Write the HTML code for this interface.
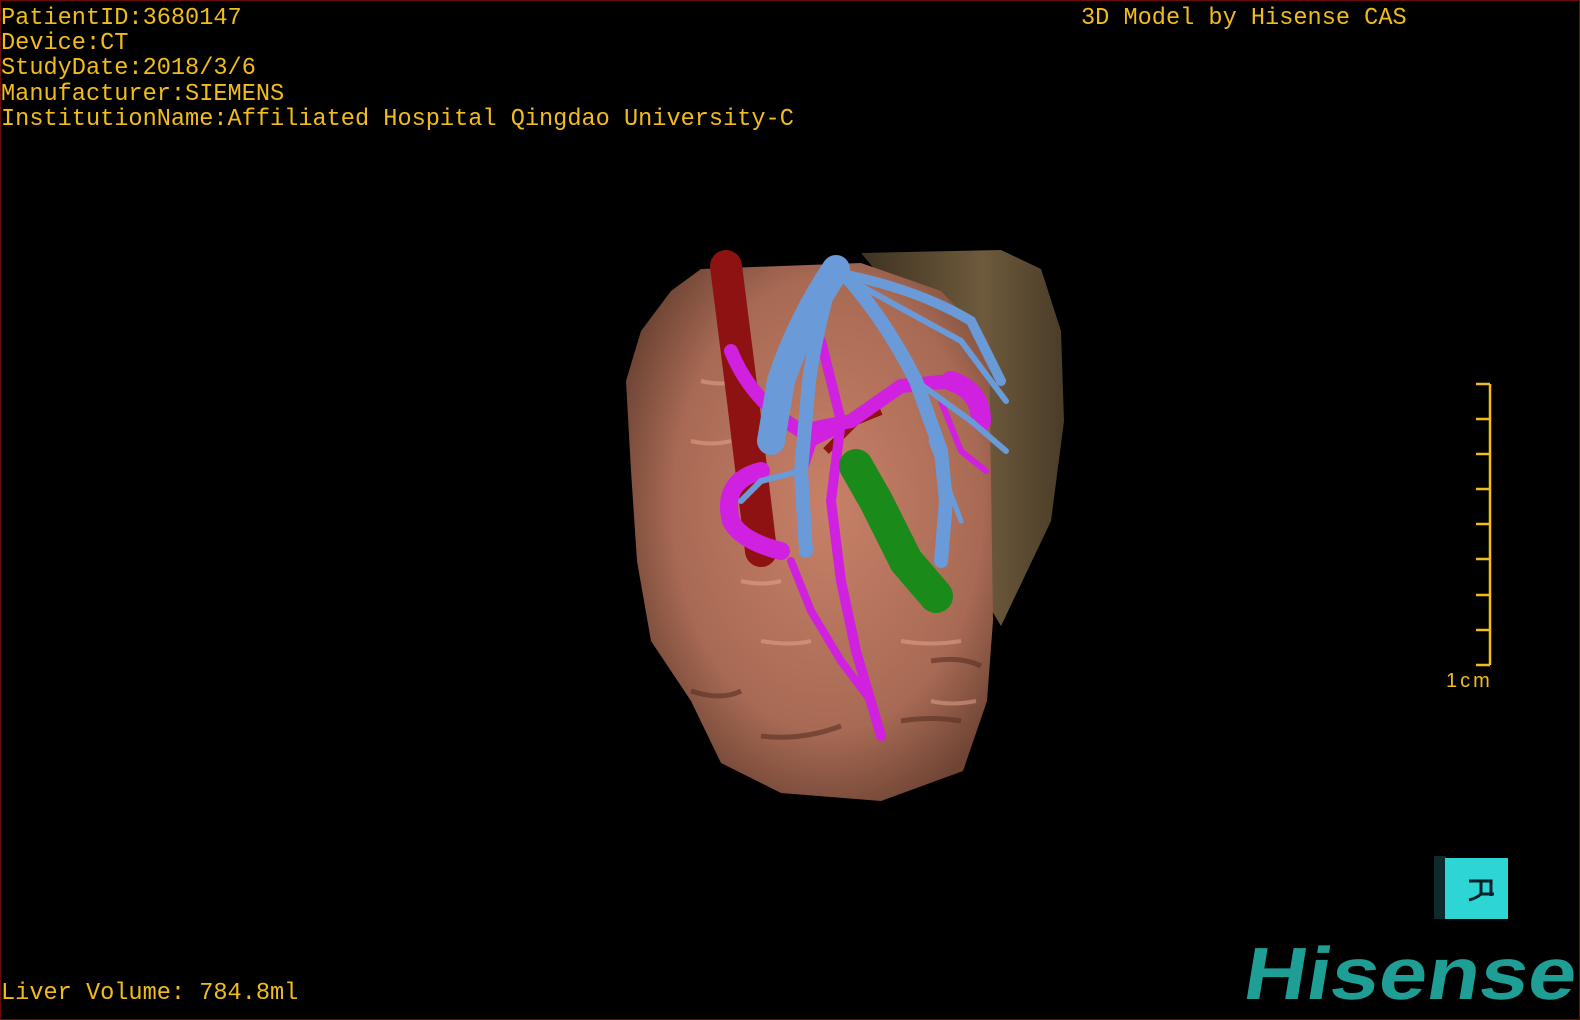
<!DOCTYPE html>
<html><head><meta charset="utf-8"><style>
html,body{margin:0;padding:0;background:#000;}
#s{position:relative;width:1580px;height:1020px;background:#000;overflow:hidden;box-sizing:border-box;border:1px solid #6a0c0c;}
.t{position:absolute;color:#f2bd1c;font-family:"Liberation Mono",monospace;font-size:23.6px;line-height:25.2px;white-space:pre;}
</style></head><body><div id="s">
<div class="t" style="left:0;top:5px">PatientID:3680147
Device:CT
StudyDate:2018/3/6
Manufacturer:SIEMENS
InstitutionName:Affiliated Hospital Qingdao University-C</div>
<div class="t" style="left:1080px;top:5px">3D Model by Hisense CAS</div>
<div class="t" style="left:0;top:980px">Liver Volume: 784.8ml</div>

<svg width="1580" height="1020" style="position:absolute;left:0;top:0">
<defs>
<radialGradient id="lv" cx="0.55" cy="0.45" r="0.6"><stop offset="0" stop-color="#c88068"/><stop offset="0.7" stop-color="#a86a54"/><stop offset="1" stop-color="#6e4434"/></radialGradient>
<linearGradient id="tan" x1="0" x2="1"><stop offset="0" stop-color="#3e3222"/><stop offset="0.6" stop-color="#6e5a3c"/><stop offset="1" stop-color="#4a3c28"/></linearGradient>
</defs>
<path d="M860,252 L1000,249 L1040,268 L1060,330 L1063,420 L1050,520 L1000,625 L985,600 L985,450 L940,360 L900,300Z" fill="url(#tan)"/>
<path d="M700,268 L860,262 L940,290 L988,340 L992,620 L986,700 L962,770 L880,800 L780,792 L720,762 L690,700 L650,640 L636,560 L630,470 L625,380 L640,330 L670,290Z" fill="url(#lv)"/>
<g fill="none" stroke="#e8a890" stroke-width="4" opacity="0.5">
<path d="M700,380 Q720,385 740,380"/><path d="M690,440 Q710,445 730,440"/><path d="M760,640 Q790,645 810,640"/><path d="M900,640 Q930,645 960,640"/><path d="M930,700 Q950,705 975,700"/><path d="M740,580 Q760,585 780,580"/>
</g>
<g fill="none" stroke="#5a3024" stroke-width="5" opacity="0.6">
<path d="M690,690 Q720,700 740,690"/><path d="M760,735 Q800,740 840,725"/><path d="M930,660 Q960,655 980,665"/><path d="M900,720 Q930,715 960,720"/>
</g>
<path d="M725,265 L742,400 L760,550" stroke="#8e1212" stroke-width="32" fill="none" stroke-linecap="round"/>
<path d="M825,450 L855,420 L880,410" stroke="#8e1212" stroke-width="8" fill="none"/>
<g fill="none" stroke="#d020e0" stroke-linecap="round">
<path d="M730,350 Q750,400 800,430 L850,420 L900,385 L950,380" stroke-width="14"/>
<path d="M760,470 Q720,480 730,520 Q740,540 780,550" stroke-width="18"/>
<path d="M820,340 L840,420 L830,500 L840,580 L855,650 L880,735" stroke-width="10"/>
<path d="M790,560 L810,610 L840,660 L870,700" stroke-width="8"/>
<path d="M950,380 Q980,390 980,420" stroke-width="20"/>
<path d="M940,400 L960,450 L985,470" stroke-width="6"/>
<path d="M830,430 L810,440 L800,470" stroke-width="12"/>
</g>
<path d="M855,465 L875,500 L905,560 L935,595" stroke="#1a8a1a" stroke-width="34" fill="none" stroke-linecap="round"/>
<g fill="none" stroke="#6a9ad8" stroke-linecap="round">
<path d="M835,268 Q800,320 780,380 L770,440" stroke-width="28"/>
<path d="M832,272 Q815,330 808,380 L800,470 L805,550" stroke-width="14"/>
<path d="M845,275 Q885,320 915,380 L940,450 L945,500 L940,560" stroke-width="14"/>
<path d="M850,275 Q920,290 970,320 L1000,380" stroke-width="10"/>
<path d="M860,285 L960,340 L1005,400" stroke-width="6"/>
<path d="M915,380 L970,420 L1005,450" stroke-width="6"/>
<path d="M800,470 L760,480 L740,500" stroke-width="6"/>
<path d="M930,440 L960,520" stroke-width="5"/>
</g>
<rect x="1433" y="855" width="12" height="63" fill="#0e2a2c"/>
<rect x="1444" y="857" width="63" height="61" fill="#2dd5d5"/>
<path d="M1468,880 H1490 V895 M1480,880 V893 Q1476,897 1468,899 M1480,893 H1493" stroke="#05202a" stroke-width="3" fill="none"/>
<g stroke="#f2bd1c" stroke-width="2.5" fill="none">
<path d="M1489,383 V664"/>
<path d="M1475,383H1489M1475,418H1489M1475,453H1489M1475,488H1489M1475,523H1489M1475,558H1489M1475,594H1489M1475,629H1489M1475,664H1489"/>
</g>
<text x="1445" y="686" fill="#f2bd1c" font-family="Liberation Sans,sans-serif" font-size="20" letter-spacing="3">1cm</text>
<text x="0" y="0" transform="translate(1240,998) scale(1.17,1) skewX(-8)" fill="#1e9e94" font-family="Liberation Sans,sans-serif" font-weight="bold" font-size="74">Hisense</text>
</svg>
</div></body></html>
